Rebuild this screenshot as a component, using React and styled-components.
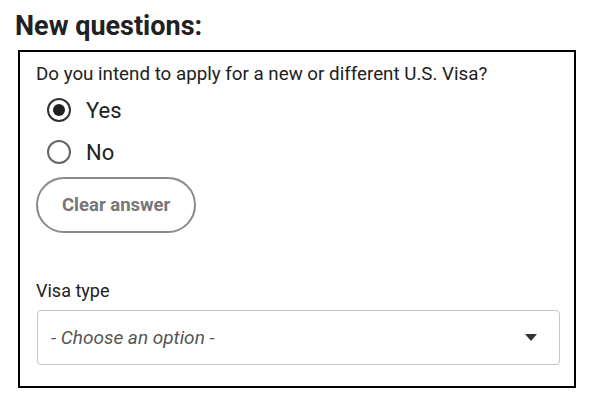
import React, { useState } from "react";
import styled, { createGlobalStyle } from "styled-components";

const Global = createGlobalStyle`
  html, body { margin: 0; padding: 0; background: #fff; }
  body { font-family: Roboto, "Liberation Sans", Arial, sans-serif; color: #212121; }
  * { box-sizing: border-box; }
`;

const Page = styled.div`
  padding: 11px 0 0 15px;
  width: 594px;
`;

const Title = styled.h2`
  margin: 0;
  font-size: 27px;
  line-height: 30px;
  font-weight: 700;
  color: #212121;
`;

const Box = styled.section`
  margin: 9px 0 0 3px;
  width: 558px;
  border: 2px solid #000;
  padding: 11px 16px 21px 16px;
  display: flex;
  flex-direction: column;
`;

const Question = styled.div`
  font-size: 18.75px;
  line-height: 22px;
  color: #212121;
`;

const RadioGroup = styled.div`
  display: flex;
  flex-direction: column;
  margin-top: 4px;
`;

const RadioRow = styled.label`
  display: flex;
  align-items: center;
  height: 42px;
  padding-left: 11px;
  gap: 15px;
  font-size: 22px;
  color: #212121;
  cursor: pointer;
`;

const Circle = styled.span`
  width: 24px;
  height: 24px;
  border-radius: 50%;
  border: 2px solid ${(p) => (p.$checked ? "#333" : "#666")};
  display: flex;
  align-items: center;
  justify-content: center;
  &::after {
    content: "";
    width: 12px;
    height: 12px;
    border-radius: 50%;
    background: #212121;
    display: ${(p) => (p.$checked ? "block" : "none")};
  }
`;

const ClearButton = styled.button`
  align-self: flex-start;
  margin-top: 4px;
  height: 56px;
  padding: 0 24px;
  border: 2px solid #8a8a8a;
  border-radius: 28px;
  background: #fff;
  font-family: Roboto, "Liberation Sans", Arial, sans-serif;
  font-size: 18.5px;
  font-weight: 700;
  color: #777;
`;

const FieldLabel = styled.div`
  margin-top: 47px;
  font-size: 18px;
  line-height: 22px;
  color: #212121;
`;

const SelectBox = styled.div`
  margin-top: 8px;
  margin-left: 1px;
  width: 523px;
  height: 55px;
  border: 1px solid #c4c4c4;
  border-radius: 4px;
  display: flex;
  align-items: center;
  justify-content: space-between;
  padding: 0 22px 0 13px;
`;

const Placeholder = styled.span`
  font-size: 19px;
  font-style: italic;
  color: #555;
`;

const Caret = styled.svg`
  width: 12px;
  height: 7px;
  display: block;
`;

export default function App() {
  const [answer, setAnswer] = useState("yes");
  return (
    <>
      <Global />
      <Page>
        <Title>New questions:</Title>
        <Box>
          <Question>Do you intend to apply for a new or different U.S. Visa?</Question>
          <RadioGroup>
            <RadioRow onClick={() => setAnswer("yes")}>
              <Circle $checked={answer === "yes"} />
              Yes
            </RadioRow>
            <RadioRow onClick={() => setAnswer("no")}>
              <Circle $checked={answer === "no"} />
              No
            </RadioRow>
          </RadioGroup>
          <ClearButton onClick={() => setAnswer(null)}>Clear answer</ClearButton>
          <FieldLabel>Visa type</FieldLabel>
          <SelectBox>
            <Placeholder>- Choose an option -</Placeholder>
            <Caret viewBox="0 0 12 7">
              <path d="M0 0 L12 0 L6 7 Z" fill="#333" />
            </Caret>
          </SelectBox>
        </Box>
      </Page>
    </>
  );
}
